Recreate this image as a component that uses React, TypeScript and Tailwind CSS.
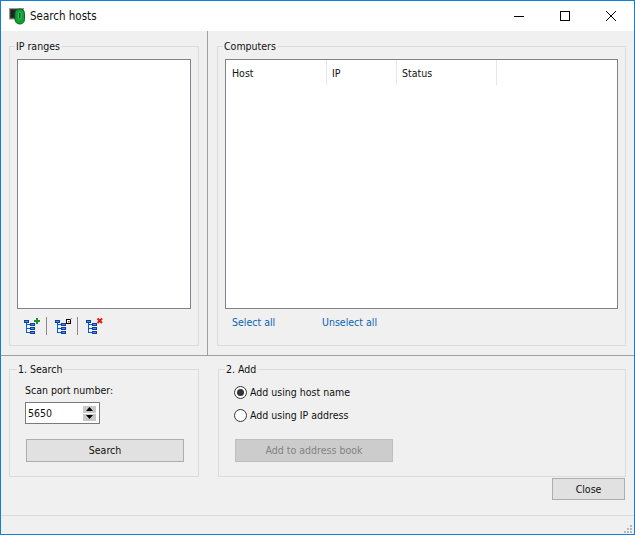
import React from 'react';

const font = "font-['DejaVu_Sans_Condensed','DejaVu_Sans',sans-serif]";

const Group: React.FC<{ title: string; className: string; legend?: string; children?: React.ReactNode }> = ({ title, className, legend, children }) => (
  <fieldset className={`border border-[#dcdcdc] min-w-0 ${className}`}>
    <legend className={`px-px text-[10.5px] leading-[14px] text-[#111] ${legend}`}>{title}</legend>
    {children}
  </fieldset>
);

const TreeBase = () => (
  <>
    <path d="M3.5 6v10M3.5 7.5h4M3.5 11.5h4M3.5 15.5h4" stroke="#0a5fc4" fill="none" />
    <rect x="1" y="3" width="5" height="3" fill="#0a3fa8" />
    <rect x="7" y="6" width="5" height="3" fill="#0a3fa8" />
    <rect x="7" y="10" width="5" height="3" fill="#0a3fa8" />
    <rect x="7" y="14" width="5" height="3" fill="#0a3fa8" />
    <path d="M2 4.5h3M8 7.5h3M8 11.5h3M8 15.5h3" stroke="#7fa8e8" strokeWidth="0.7" fill="none" />
  </>
);

const TreeAdd = () => (
  <svg width="18" height="18" viewBox="0 0 18 18" className="overflow-visible">
    <TreeBase />
    <path d="M13 1h2v2h2v2h-2v2h-2v-2h-2v-2h2z" fill="#1f8a2e" />
  </svg>
);

const TreeEdit = () => (
  <svg width="18" height="18" viewBox="0 0 18 18" className="overflow-visible">
    <TreeBase />
    <rect x="12.5" y="2.5" width="4" height="4" fill="#fff" stroke="#000" strokeWidth="1" />
    <rect x="14" y="4" width="1.5" height="1.5" fill="#e0401a" />
    <path d="M16.5 2.5l1-1.5" stroke="#e8601a" strokeWidth="1" />
  </svg>
);

const TreeRemove = () => (
  <svg width="18" height="18" viewBox="0 0 18 18" className="overflow-visible">
    <TreeBase />
    <path d="M12.5 1.5l4.5 4.5M17 1.5l-4.5 4.5" stroke="#e01b0c" strokeWidth="2" />
  </svg>
);

const AppIcon = () => (
  <svg width="17" height="17" viewBox="0 0 17 17">
    <rect x="0.5" y="0.5" width="14" height="10.5" fill="#3a3a3a" stroke="#9a9a9a" />
    <rect x="2" y="2" width="11" height="7.5" fill="#222" />
    <rect x="6" y="1" width="9.5" height="15" rx="4.5" fill="#10a030" stroke="#0a6a20" />
    <rect x="9.5" y="4" width="2.5" height="7" rx="1.2" fill="#063" stroke="#7fe08f" strokeWidth="0.6" />
  </svg>
);

const Radio: React.FC<{ checked?: boolean; label: string }> = ({ checked, label }) => (
  <div className="flex items-center h-[14px]">
    <span className="w-[13px] h-[13px] rounded-full border border-[#333] bg-white flex items-center justify-center shrink-0">
      {checked && <span className="w-[7px] h-[7px] rounded-full bg-[#333]" />}
    </span>
    <span className="ml-[3px] pt-px text-[10.5px] text-[#111]">{label}</span>
  </div>
);

export default function App() {
  return (
    <div className={`w-[635px] h-[535px] flex flex-col bg-[#f0f0f0] border border-[#0f7fd8] overflow-hidden ${font}`}>
      {/* Title bar */}
      <div className="h-[30px] bg-white flex items-center shrink-0">
        <div className="ml-[8px] mr-[4px] flex"><AppIcon /></div>
        <span className="text-[11.5px] text-[#111] pt-[2px]">Search hosts</span>
        <div className="ml-auto flex items-center">
          <div className="w-[46px] h-[30px] flex items-center justify-center">
            <svg width="10" height="10" viewBox="0 0 10 10"><path d="M0 5.5h10" stroke="#000" /></svg>
          </div>
          <div className="w-[46px] h-[30px] flex items-center justify-center">
            <svg width="10" height="10" viewBox="0 0 10 10"><rect x="0.5" y="0.5" width="9" height="9" fill="none" stroke="#000" /></svg>
          </div>
          <div className="w-[46px] h-[30px] flex items-center justify-center">
            <svg width="10" height="10" viewBox="0 0 10 10"><path d="M0 0l10 10M10 0L0 10" stroke="#000" strokeWidth="1" /></svg>
          </div>
        </div>
      </div>

      {/* Upper panes */}
      <div className="h-[325px] flex shrink-0 border-b border-[#a0a0a0]">
        <div className="w-[207px] shrink-0 border-r border-[#a0a0a0] pl-[8px] pr-[8px] pt-[8px]">
          <Group title="IP ranges" legend="-ml-[2px]" className="h-[307px] px-[7px]">
            <div className="h-[250px] bg-white border border-[#82828c] mt-[6px]" />
            <div className="flex items-center mt-[8px] ml-[6px]">
              <TreeAdd />
              <span className="w-px h-[18px] bg-[#8a8a8a] ml-[5px] mr-[7px]" />
              <TreeEdit />
              <span className="w-px h-[18px] bg-[#8a8a8a] ml-[5px] mr-[7px]" />
              <TreeRemove />
            </div>
          </Group>
        </div>
        <div className="flex-1 pl-[9px] pr-[8px] pt-[8px]">
          <Group title="Computers" legend="-ml-[2px]" className="h-[307px] px-[7px]">
            <div className="h-[250px] bg-white border border-[#82828c] mt-[6px]">
              <div className="flex h-[25px] items-center text-[10.5px] text-[#111]">
                <div className="w-[101px] h-full pl-[6px] pt-[2px] flex items-center border-r border-[#e6e6e6]">Host</div>
                <div className="w-[70px] h-full pl-[5px] pt-[2px] flex items-center border-r border-[#e6e6e6]">IP</div>
                <div className="w-[100px] h-full pl-[5px] pt-[2px] flex items-center border-r border-[#e6e6e6]">Status</div>
              </div>
            </div>
            <div className="flex mt-[6px] ml-[7px] text-[10.5px] leading-[14px] text-[#0a64b4]">
              <span className="w-[90px]">Select all</span>
              <span>Unselect all</span>
            </div>
          </Group>
        </div>
      </div>

      {/* Lower panes */}
      <div className="flex-1 flex flex-col min-h-0">
        <div className="flex pl-[8px] pr-[8px] pt-[6px]">
          <Group title="1. Search" legend="-ml-[8px]" className="w-[190px] h-[115px] px-[15px]">
            <div className="text-[10.5px] text-[#111] leading-[14px] mt-[7px]">Scan port number:</div>
            <div className="mt-[5px] w-[75px] h-[22px] bg-white border border-[#7a7a7a] flex items-center justify-between pl-[2px] pr-[3px]">
              <span className="pt-px text-[10.5px] text-[#111]">5650</span>
              <div className="flex flex-col gap-px">
                <span className="w-[13px] h-[7px] bg-[#c8c8c8] flex items-center justify-center">
                  <svg width="7" height="4" viewBox="0 0 7 4"><path d="M3.5 0L7 4H0z" fill="#000" /></svg>
                </span>
                <span className="w-[13px] h-[7px] bg-[#c8c8c8] flex items-center justify-center">
                  <svg width="7" height="4" viewBox="0 0 7 4"><path d="M0 0h7L3.5 4z" fill="#000" /></svg>
                </span>
              </div>
            </div>
            <button className="block mt-[15px] ml-px w-[158px] h-[23px] pt-px bg-[#e1e1e1] border border-[#adadad] text-[10.5px] text-[#111]">Search</button>
          </Group>
          <Group title="2. Add" legend="-ml-[9px]" className="ml-[19px] w-[408px] h-[115px] px-[15px]">
            <div className="mt-[9px] flex flex-col gap-[9px]">
              <Radio checked label="Add using host name" />
              <Radio label="Add using IP address" />
            </div>
            <button disabled className="block mt-[17px] ml-px w-[158px] h-[23px] pt-px bg-[#cccccc] border border-[#bfbfbf] text-[10.5px] text-[#838383]">Add to address book</button>
          </Group>
        </div>
        <div className="flex justify-end pr-[9px] mt-px">
          <button className="w-[73px] h-[22px] pt-px bg-[#e1e1e1] border border-[#adadad] text-[10.5px] text-[#111]">Close</button>
        </div>
      </div>

      {/* Status bar */}
      <div className="h-[19px] shrink-0 border-t border-[#dcdcdc] flex justify-end items-end pr-[1px]">
        <svg width="9" height="9" viewBox="0 0 9 9" fill="#b8b8b8">
          <rect x="6" y="0" width="2" height="2" />
          <rect x="3" y="3" width="2" height="2" />
          <rect x="6" y="3" width="2" height="2" />
          <rect x="0" y="6" width="2" height="2" />
          <rect x="3" y="6" width="2" height="2" />
          <rect x="6" y="6" width="2" height="2" />
        </svg>
      </div>
    </div>
  );
}
